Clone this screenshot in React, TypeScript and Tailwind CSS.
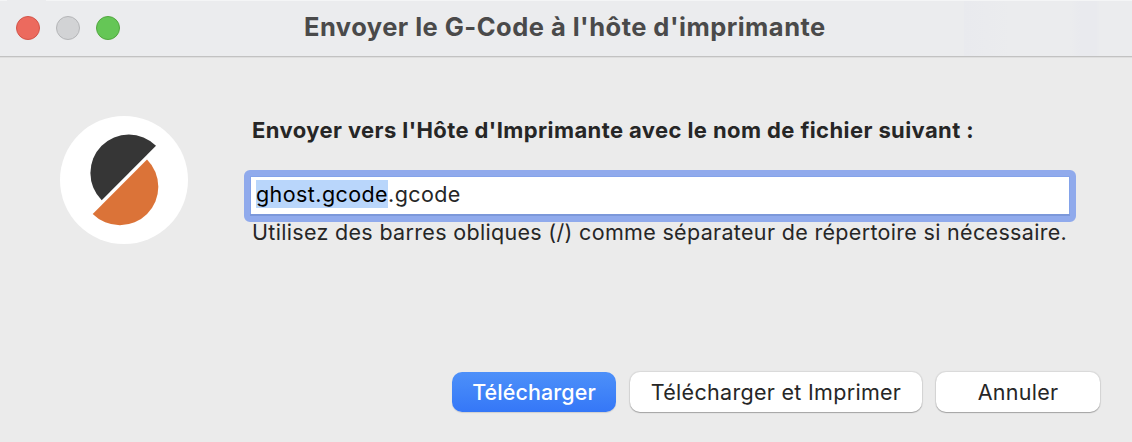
function Logo() {
  return (
    <svg className="mt-[58px] ml-[60px] size-32 shrink-0" viewBox="0 0 128 128" aria-hidden="true">
      <circle cx="64" cy="64" r="64" fill="#fff" />
      <path d="M96 29.7A38.3 38.3 0 0 0 41.7 84.2Z" fill="#363636" />
      <path d="M87 43.5A38.3 38.3 0 0 1 32.7 98Z" fill="#db7338" />
    </svg>
  );
}

function TitleBar() {
  return (
    <header className="relative flex h-[58px] shrink-0 items-center justify-center border-b border-[#dedede] bg-[linear-gradient(90deg,#ebecee_964px,#e9eaee_964px,#ebecee_1010px,#ebecee_1070px,#e9eaee_1080px,#e9eaee_1096px,#ebecee_1100px)] shadow-[inset_0_-1px_0_#c2c2c2,inset_0_1px_0_#f4f5f6]">
      <span className="absolute top-0 left-[7px] h-px w-[39px] bg-[#ebecee]" />
      <div className="absolute top-4 left-4 flex gap-4">
        <span className="size-6 rounded-full border border-[#d35449] bg-[#ec6a5e]" />
        <span className="size-6 rounded-full border border-[#b5b6b8] bg-[#d2d3d5]" />
        <span className="size-6 rounded-full border border-[#52a73f] bg-[#65c656]" />
      </div>
      <h1 className="mb-1 w-[524px] text-[25.5px] leading-8 font-bold tracking-[0.47px] whitespace-nowrap text-[#4a4a4a]">
        Envoyer le G-Code à l'hôte d'imprimante
      </h1>
    </header>
  );
}

const plain =
  "h-10 rounded-[10px] bg-white text-[#262626] shadow-[0_0_1px_1px_rgba(0,0,0,0.08),0_1px_1px_rgba(0,0,0,0.25)]";

export default function App() {
  return (
    <main className="flex h-[442px] w-[1132px] flex-col overflow-hidden bg-[#ebebeb] font-['Inter',sans-serif] text-[22px] text-[#262626]">
      <TitleBar />
      <section className="flex h-[314px]">
        <Logo />
        <div className="ml-14 flex w-[832px] flex-col pt-[58px]">
          <p className="pl-2 text-[22px] leading-7 font-bold tracking-[0.4px] whitespace-nowrap">
            Envoyer vers l'Hôte d'Imprimante avec le nom de fichier suivant :
          </p>
          <div className="mt-[26px] flex h-[52px] items-start rounded-md border-[6px] border-[#90aaec] bg-white pt-1 pl-[6px] text-[21.5px] leading-7 tracking-[0.42px] shadow-[inset_0_-2px_0_#7c98da,inset_1px_0_0_#84a3ea,inset_-1px_0_0_#84a3ea,inset_0_1px_0_#84a3ea]">
            <span className="bg-[#b9d6fb] text-black">ghost.gcode</span>
            <span>.gcode</span>
          </div>
          <p className="-mt-1 pl-2 text-[21.5px] leading-7 tracking-[0.32px] whitespace-nowrap">
            Utilisez des barres obliques (/) comme séparateur de répertoire si nécessaire.
          </p>
        </div>
      </section>
      <footer className="flex justify-end gap-[14px] pr-8 text-[21.5px]">
        <button className="h-10 w-[164px] rounded-[10px] bg-linear-to-b from-[#4d90f9] to-[#3577f7] font-medium tracking-[0.08px] text-white shadow-[0_1px_1px_rgba(0,0,0,0.12)]">
          Télécharger
        </button>
        <button className={`${plain} w-[292px] tracking-[0.3px]`}>Télécharger et Imprimer</button>
        <button className={`${plain} w-[164px] tracking-[0.25px]`}>Annuler</button>
      </footer>
    </main>
  );
}
